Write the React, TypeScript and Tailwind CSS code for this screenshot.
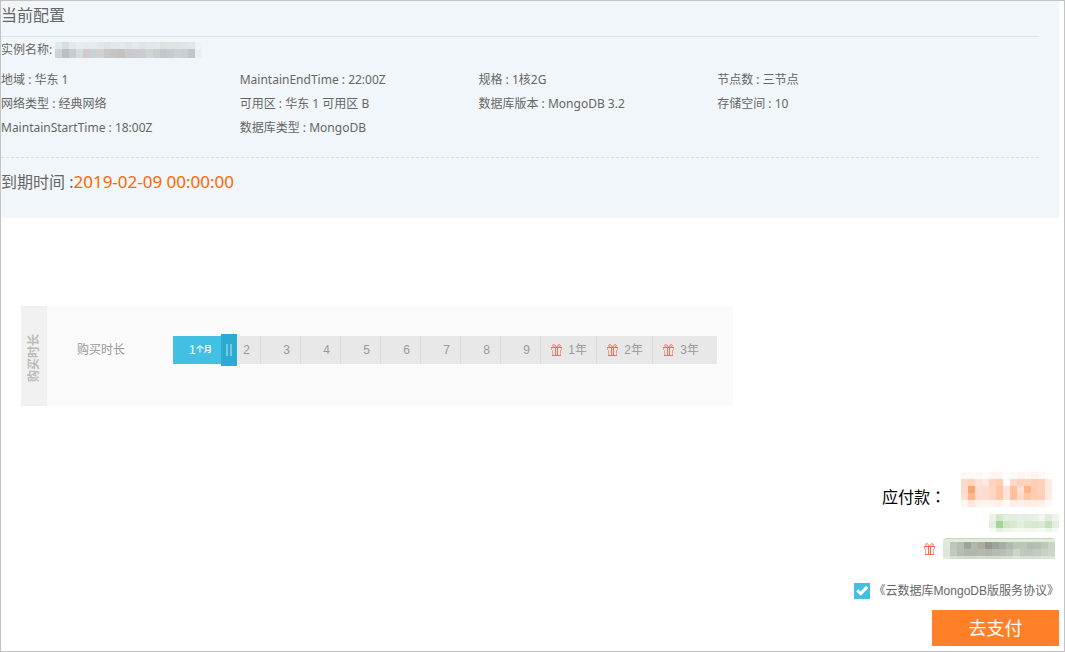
import { useState } from "react";

const configData = [
  { label: "地域", value: "华东 1" },
  { label: "MaintainEndTime", value: "22:00Z" },
  { label: "规格", value: "1核2G" },
  { label: "节点数", value: "三节点" },
  { label: "网络类型", value: "经典网络" },
  { label: "可用区", value: "华东 1 可用区 B" },
  { label: "数据库版本", value: "MongoDB 3.2" },
  { label: "存储空间", value: "10" },
  { label: "MaintainStartTime", value: "18:00Z" },
  { label: "数据库类型", value: "MongoDB" },
];

const durationData = [
  { title: "2", gift: false },
  { title: "3", gift: false },
  { title: "4", gift: false },
  { title: "5", gift: false },
  { title: "6", gift: false },
  { title: "7", gift: false },
  { title: "8", gift: false },
  { title: "9", gift: false },
  { title: "1年", gift: true },
  { title: "2年", gift: true },
  { title: "3年", gift: true },
];

// colours of the censored values, one string per row
const nameCells = [
  "e3e8ea d8dde2 e4e8ea e8ecee e6eaec e7ebed e4e8ea dfe3e5 e4e8eb e5e9ec e1e5e7 e5e9ec e0e4e6 e2e6e8 e4e8ea dde1e3 dfe3e1 e0e3e3 e1e4e6 e3e7e9 eef3f8",
  "d0d1d3 b9c0c5 cacdd0 d8dbde d0cccc c9d1d9 d0d2d1 cac8c7 c4c5c5 c4c1bf c8cacb c8cccf c9ccd0 d0d4d6 cbcecf c4c8cb c8cbcd ced1d3 cbcfd0 c3c6c8 ebf0f6",
];
const priceCells = [
  "fff7f3 fff9f6 fff9f6 fffdfc fff4ef fff4ef ffffff fff9f6 fff4ef fffaf7 fff3ed fff8f5 fffdfc",
  "ffd9c5 ffd2bc ffe3d9 ffeae2 ffd2bc ffcdb4 fffefe ffd8c7 ffd0ba ffd3be ffceb6 ffd2bd ffebe3",
  "ffdcc9 ffa470 ffdcd0 ffdccf ffd5c3 ffc5a4 ffe3d7 ffc09d ffe0d3 ffb583 ffcdb3 ffd2bd ffeae3",
  "ffe0d0 ffb68e ffdccf ffdcd0 ffd6c3 ffc6a8 ffe4d9 ffbf9e ffdac9 ffc6a4 ffcdb4 ffcfb9 ffece5",
  "fff5f0 ffe7dd fff3ee fff5f1 fff2ec ffefe7 fff9f6 ffece4 fff0e9 ffeee6 ffeee7 fff0ea fffaf8",
];
const discountCells = [
  "eaf4e6 d2e8c9 e0eedb e1eedc e6f0e2 e5efe0 e8f0e2 f0f5ee e1ecdd f0f5ee",
  "e5efe0 a9d392 cfe7c7 d7ead0 e3efde d7e9d0 d8e8d0 dbead5 c8dfc0 e3eedf",
  "f7fbf6 e3f1dc edf6ea f0f7ed f3f8f1 f0f7ed f2f7ef f5f9f3 edf5e9 f6faf5",
];
const tagCells = [
  "dfe8d9 bdc6b8 b5bdb0 9da598 b1b7a9 abae9f 96998b 9ca59d a7ada0 b3b9ae bcc4b7 bdc6ba b4bdb0 b4beb3 bfc9ba c9d4c3",
  "dce6d6 c1cbbb b5beae afb8aa afb8aa b2baac aeb7a9 b3bcae b5beb1 bdc7b9 cbd6c4 bfc9bb bfc9bb c0cabd c8d2c2 cbd6c5",
  "e4ebdf d6e0d0 d2dccb d1dbca d1dbca d3ddcc d0dac9 d2dccb d3ddcc d6e0cf dbe4d5 d7e0d0 d7e0d0 d7e1d1 dae3d4 dbe4d5",
];

type mosaicProps = { rows: string[]; heights: number[]; label: string };

const Mosaic = ({ rows, heights, label }: mosaicProps) => {
  let width = rows[0].split(" ").length * 7;
  let height = heights.reduce((sum, h) => sum + h, 0);
  return (
    <svg
      role="img"
      aria-label={label}
      width={width}
      height={height}
      shapeRendering="crispEdges"
      className="shrink-0"
    >
      {rows.map((row, y) => {
        let top = heights.slice(0, y).reduce((sum, h) => sum + h, 0);
        return row
          .split(" ")
          .map((color, x) => (
            <rect
              key={`${x}-${y}`}
              x={x * 7}
              y={top}
              width={7}
              height={heights[y]}
              fill={`#${color}`}
            />
          ));
      })}
    </svg>
  );
};

const GiftIcon = () => (
  <svg
    width="11"
    height="12"
    viewBox="0 0 11 12"
    fill="none"
    stroke="#ff6a3c"
    className="shrink-0"
    aria-hidden="true"
  >
    <path d="M.5 6V3.500M10.500 6V3.500M1.500 6v5.500M9.500 6v5.500" stroke="#ff9c8c" />
    <path d="M0 3.500h11M1 11.500h9M4.500 3.500v8M6.500 3.500v8" />
    <path d="M5.500 3.300 3.300.6Q2 .4 1.700 1.700L2.500 3.300M5.500 3.300 7.700.6Q9 .4 9.300 1.700L8.500 3.300" />
  </svg>
);

const CurrentConfig = () => (
  <section className="mr-[5px] bg-[#f0f6f9] pr-5 pb-3 text-[#666]">
    <h1 className="border-b border-[#d8e5ee] pb-[7px] text-base leading-7">
      当前配置
    </h1>
    <div className="mb-[6px] flex items-center gap-[3px] pt-px text-xs leading-6">
      <span>实例名称:</span>
      <Mosaic rows={nameCells} heights={[7, 9]} label="实例名称" />
    </div>
    <ul className="grid grid-cols-[23%_23%_23%_23%] border-b border-dashed border-[#d9dfe2] pb-[17px] text-xs leading-6">
      {configData.map(({ label, value }) => (
        <li key={label} className="whitespace-nowrap">
          {label} : {value}
        </li>
      ))}
    </ul>
    <p className="text-base leading-12">
      到期时间 :
      <span className="text-[17px] text-[#ff6600]">2019-02-09 00:00:00</span>
    </p>
  </section>
);

const DurationPicker = () => {
  let [duration, setDuration] = useState(1);
  return (
    <section className="mt-22 ml-5 flex w-[67%] min-w-fit bg-[#fafafa]">
      <h2 className="flex w-[26px] items-center justify-center bg-[#f1f1f1] pt-1 text-xs font-bold text-[#bbb]">
        <span className="-rotate-90 whitespace-nowrap">购买时长</span>
      </h2>
      <div className="flex items-center pt-7 pr-4 pb-10 pl-[30px] text-xs text-[#999]">
        <label htmlFor="duration" className="w-24">
          购买时长
        </label>
        <div className="relative flex h-8 items-center font-['Liberation_Sans','Noto_Sans_CJK_SC',sans-serif]">
          <div className="flex h-7 w-12 items-center bg-[#44bfe4] pl-4 text-white">
            1<span className="text-[8px] font-bold">个月</span>
          </div>
          {durationData.map(({ title, gift }) => (
            <div
              key={title}
              className={`flex h-7 items-center justify-end border-r bg-[#e8e8e8] ${
                gift
                  ? "w-14 gap-[6px] border-[#dcdcdc] pr-[9px] last-of-type:w-16 last-of-type:border-[#e8e8e8] last-of-type:pr-[17px]"
                  : "w-10 border-[#dcdcdc] pr-[10px]"
              }`}
            >
              {gift && <GiftIcon />}
              {title}
            </div>
          ))}
          <span className="pointer-events-none absolute top-0 left-12 flex h-8 w-4 items-center justify-center gap-[2px] bg-[#2babd2]">
            <i className="h-3 w-[2px] bg-[#75c8e1]" />
            <i className="h-3 w-[2px] bg-[#75c8e1]" />
          </span>
          <input
            id="duration"
            type="range"
            min={1}
            max={12}
            value={duration}
            onChange={(e) => setDuration(Number(e.target.value))}
            className="absolute inset-0 h-full w-full cursor-pointer opacity-0"
          />
        </div>
      </div>
    </section>
  );
};

const Payment = () => {
  let [agreed, setAgreed] = useState(true);
  return (
    <section className="mt-[66px] mr-[5px] flex flex-col items-end pb-[5px]">
      <div className="mr-[7px] flex items-end gap-[15px]">
        <span className="text-base leading-5 text-black">
          应付款
          <span className="font-['Noto_Sans_CJK_TC',sans-serif]" lang="zh-TW">
            ：
          </span>
        </span>
        <Mosaic rows={priceCells} heights={[7, 7, 7, 7, 7]} label="应付款" />
      </div>
      <div className="mt-[7px] flex">
        <Mosaic rows={discountCells} heights={[7, 7, 4]} label="优惠" />
      </div>
      <div className="mt-[6px] mr-1 flex items-center gap-2">
        <GiftIcon />
        <div className="flex overflow-hidden rounded-t-sm border-t border-[#c4dcb8] bg-[#e0edd9] pt-[3px]">
          <Mosaic rows={tagCells} heights={[7, 7, 3]} label="优惠信息" />
        </div>
      </div>
      <div className="mt-5 flex h-6 items-center text-xs text-[#666]">
        <span className="relative mr-1 flex">
          <input
            id="agree"
            type="checkbox"
            checked={agreed}
            onChange={() => setAgreed(!agreed)}
            aria-label="同意服务协议"
            className="h-4 w-4 cursor-pointer appearance-none border border-[#44bfe4] checked:bg-[#44bfe4]"
          />
          {agreed && (
            <svg
              viewBox="0 0 16 16"
              className="pointer-events-none absolute inset-0"
              fill="none"
              stroke="#fff"
              strokeWidth="3"
            >
              <path d="M3.300 7.400 6.700 10.700 13.200 3.900" />
            </svg>
          )}
        </span>
        <a href="#agreement" className="whitespace-nowrap">
          《云数据库<span className="font-['Liberation_Sans']">MongoDB</span>
          版服务协议》
        </a>
      </div>
      <button className="mt-[7px] h-9 w-[127px] cursor-pointer bg-[#ff8029] text-lg text-white">
        去支付
      </button>
    </section>
  );
};

const App = () => {
  return (
    <main className="border border-[#c3c3c3] bg-white font-['Noto_Sans','Noto_Sans_CJK_SC',sans-serif]">
      <CurrentConfig />
      <DurationPicker />
      <Payment />
    </main>
  );
};

export default App;
